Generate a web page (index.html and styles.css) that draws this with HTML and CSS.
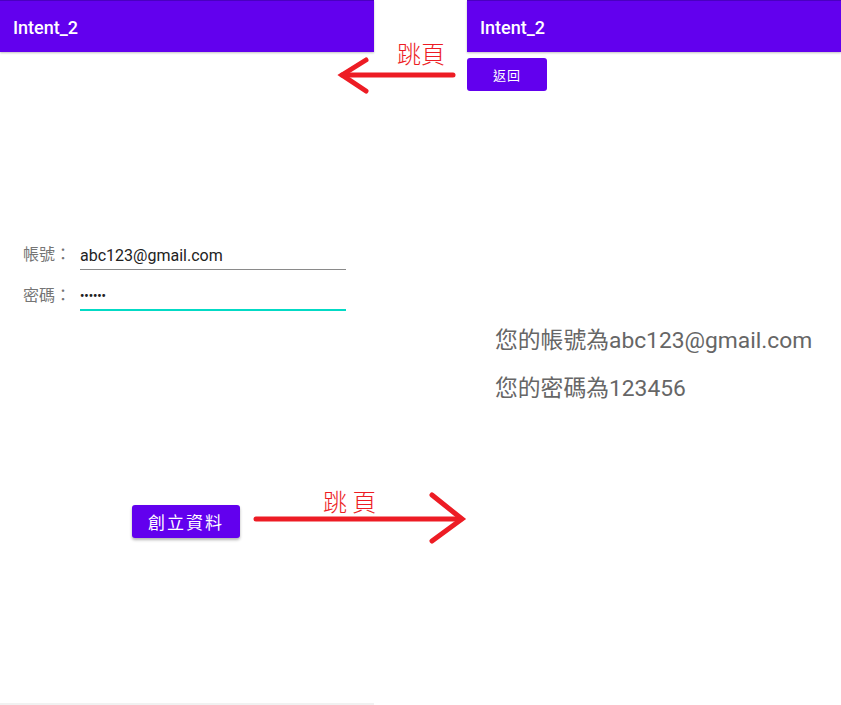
FILE: index.html
```html
<!DOCTYPE html>
<html lang="zh-Hant">
<head>
<meta charset="utf-8">
<title>Intent_2</title>
<link rel="stylesheet" href="styles.css">
</head>
<body>
<div class="stage">
    <!-- 第一頁: 輸入帳號密碼 -->
    <div class="phone phone-left">
        <div class="appbar">Intent_2</div>
        <div class="form">
            <div class="field">
                <span class="label">帳號：</span>
                <span class="input">abc123@gmail.com</span>
            </div>
            <div class="field">
                <span class="label">密碼：</span>
                <span class="input input-focus dots">••••••</span>
            </div>
        </div>
        <div class="create-row">
            <button class="btn btn-create">創立資料</button>
        </div>
    </div>

    <!-- 第二頁: 顯示資料 -->
    <div class="phone phone-right">
        <div class="appbar">Intent_2</div>
        <button class="btn btn-back">返回</button>
        <div class="result">
            <p class="result-line">您的帳號為abc123@gmail.com</p>
            <p class="result-line">您的密碼為123456</p>
        </div>
    </div>

    <!-- 註解箭頭 -->
    <svg class="arrows" width="841" height="705" viewBox="0 0 841 705">
        <g stroke="#ed1c24" stroke-width="5" stroke-linecap="round" fill="none">
            <line x1="453" y1="75" x2="342" y2="75"/>
            <polyline points="366,60 342,75 366,91"/>
            <line x1="256" y1="519" x2="461" y2="519"/>
            <polyline points="432,495 462,519 432,541"/>
        </g>
    </svg>
    <span class="note note-top">跳頁</span>
    <span class="note note-bottom">跳 頁</span>
</div>
</body>
</html>
```

FILE: styles.css
```css
body{
    margin: 0;
    background-color: #ffffff;
    font-family: Roboto, "Noto Sans CJK TC", sans-serif;
}
.stage{
    position: relative;
    width: 841px;
    height: 705px;
    display: flex;
    justify-content: space-between;
    overflow: hidden;
}
.phone{
    width: 374px;
    height: 705px;
    box-sizing: border-box;
}
.phone-left{
    border-bottom: 2px solid #f1f1f1;
}
.appbar{
    height: 52px;
    box-sizing: border-box;
    border-top: 1px solid #4a00c0;
    background-color: #6200ee;
    box-shadow: 0 1px 2px rgba(0, 0, 0, 0.25);
    color: #ffffff;
    font-size: 18px;
    font-weight: 500;
    line-height: 53px;
    padding-left: 13px;
}

/* 表單 */
.form{
    margin-top: 188px;
    display: flex;
    flex-direction: column;
    gap: 11px;
}
.field{
    display: flex;
    align-items: flex-end;
    height: 30px;
}
.label{
    flex: none;
    width: 80px;
    padding-left: 23px;
    box-sizing: border-box;
    white-space: nowrap;
    color: #757575;
    font-size: 16px;
    line-height: 30px;
}
.input{
    flex: none;
    width: 266px;
    height: 30px;
    box-sizing: border-box;
    border-bottom: 1px solid #8a8a8a;
    color: #222222;
    font-size: 16px;
    line-height: 32px;
}
.input-focus{
    border-bottom: 2px solid #03dac5;
}
.dots{
    font-size: 12px;
    font-weight: bold;
    line-height: 30px;
}

.btn{
    background-color: #6200ee;
    color: #ffffff;
    border: none;
    border-radius: 3px;
    font-family: Roboto, "Noto Sans CJK TC", sans-serif;
    padding: 0;
}
.create-row{
    margin-top: 194px;
    padding-left: 132px;
}
.btn-create{
    width: 108px;
    height: 33px;
    font-size: 17px;
    letter-spacing: 2px;
    box-shadow: 0 2px 3px rgba(0, 0, 0, 0.3);
}
.btn-back{
    display: block;
    margin-top: 6px;
    width: 80px;
    height: 33px;
    font-size: 13px;
    letter-spacing: 1px;
}

.result{
    padding-left: 28px;
    margin-top: 235px;
}
.result-line{
    margin: 0 0 18px 0;
    color: #666666;
    font-size: 22.8px;
    line-height: 30px;
}

/* 紅色註解 */
.arrows{
    position: absolute;
    left: 0;
    top: 0;
    pointer-events: none;
}
.note{
    position: absolute;
    color: #ed1c24;
    font-family: "Noto Sans CJK TC", sans-serif;
    font-weight: 300;
    font-size: 24px;
    line-height: 1;
}
.note-top{
    left: 397px;
    top: 41px;
}
.note-bottom{
    left: 323px;
    top: 489px;
}
```
